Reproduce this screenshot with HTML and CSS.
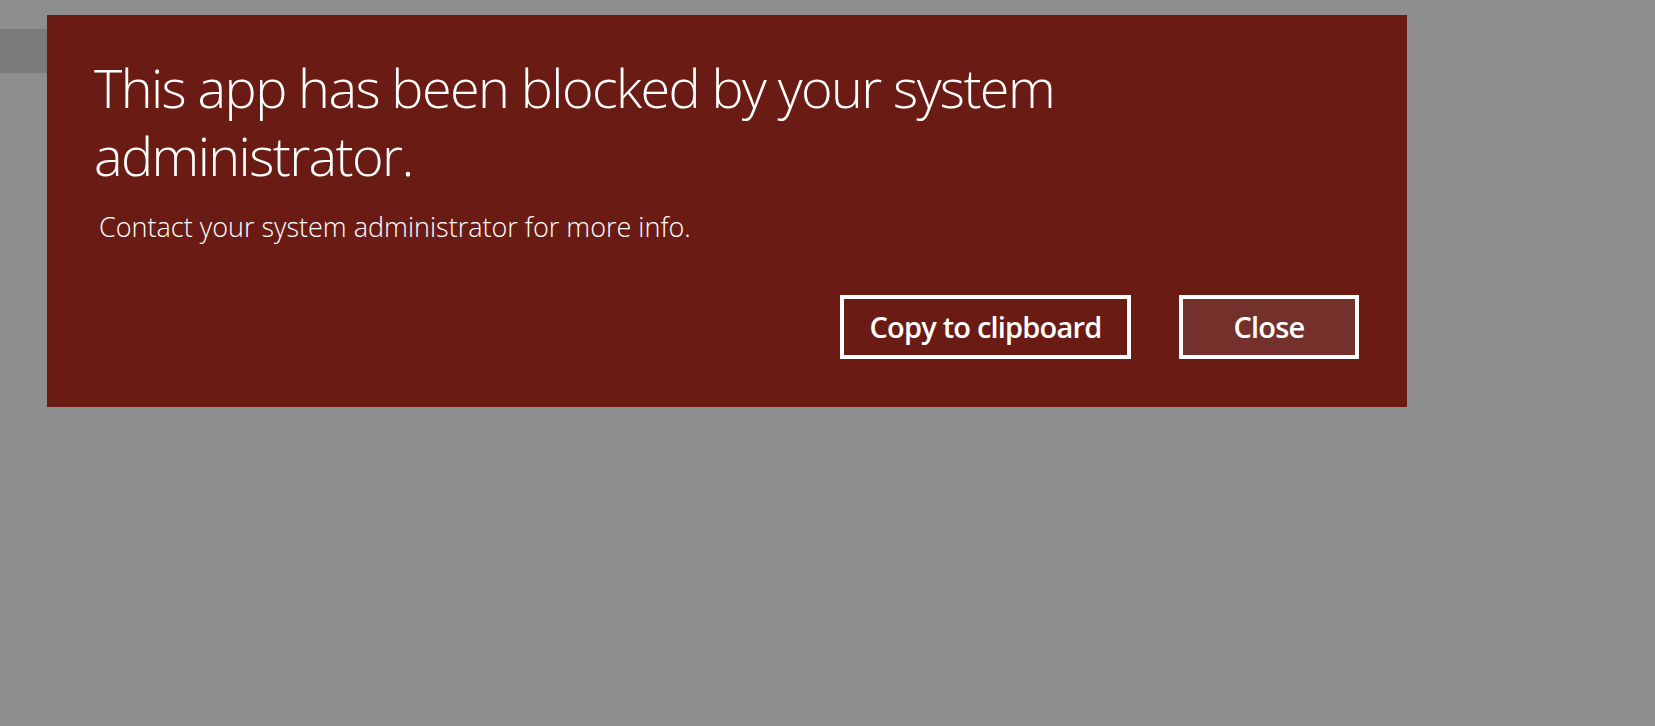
FILE: index.html
```html
<!DOCTYPE html>
<html lang="en">
<head>
<meta charset="utf-8">
<title>This app has been blocked</title>
<link rel="stylesheet" href="styles.css">
</head>
<body>
<div class="backdrop">
  <div class="window-bar"></div>
</div>
<div class="dialog" role="alertdialog">
  <h1 class="title">This app has been blocked by your system administrator.</h1>
  <p class="message">Contact your system administrator for more info.</p>
  <div class="actions">
    <button class="btn btn-copy">Copy to clipboard</button>
    <button class="btn btn-close">Close</button>
  </div>
</div>
</body>
</html>
```
FILE: styles.css
```css
html, body {
  margin: 0;
  padding: 0;
  height: 100%;
}
body {
  background: #8e8e8e;
  font-family: "Open Sans", "Noto Sans", sans-serif;
  overflow: hidden;
}
.backdrop {
  padding-top: 29px;
}
.window-bar {
  width: 600px;
  height: 44px;
  background: #7b7b7b;
}
.dialog {
  position: absolute;
  left: 47px;
  top: 15px;
  width: 1360px;
  box-sizing: border-box;
  background: #6a1c14;
  color: #ffffff;
  padding: 38px 48px 48px 47px;
}
.title {
  margin: 0;
  max-width: 1040px;
  font-size: 54px;
  line-height: 68px;
  font-weight: 300;
  letter-spacing: -1.6px;
}
.message {
  margin: 20px 0 0;
  padding-left: 5px;
  font-size: 27px;
  line-height: 36px;
  font-weight: 300;
}
.actions {
  display: flex;
  justify-content: flex-end;
  gap: 48px;
  margin-top: 50px;
}
.btn {
  box-sizing: border-box;
  height: 64px;
  border: 4px solid #ffffff;
  background: #6a1c14;
  color: #ffffff;
  font-family: "Open Sans", "Noto Sans", sans-serif;
  font-size: 29px;
  font-weight: 600;
  letter-spacing: -0.8px;
  line-height: 56px;
  padding: 0;
  white-space: nowrap;
  text-align: center;
}
.btn-copy {
  width: 291px;
}
.btn-close {
  width: 180px;
  background: #74302a;
}
```
